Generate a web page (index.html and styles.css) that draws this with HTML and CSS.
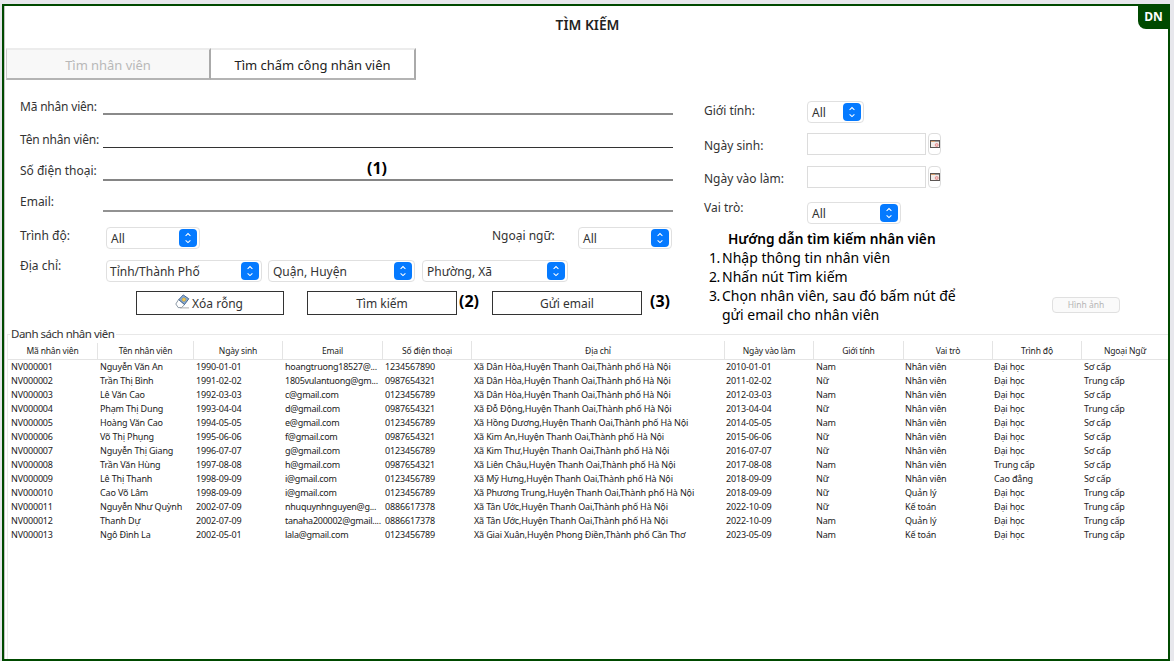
FILE: index.html
```html
<!DOCTYPE html>
<html lang="vi">
<head>
<meta charset="utf-8">
<title>Tìm kiếm nhân viên</title>
<link rel="stylesheet" href="styles.css">
</head>
<body>
<svg class="defs" aria-hidden="true">
  <symbol id="chev" viewBox="0 0 18 18"><path d="M6.6 6.8 9 4.6l2.4 2.2M6.6 11.4 9 13.6l2.4-2.2" fill="none" stroke="#fff" stroke-width="1.1"/></symbol>
  <symbol id="cal" viewBox="0 0 10 8"><rect x=".5" y=".5" width="9" height="7" fill="#f1ece9" stroke="#5b5553"/><path d="M1 1.5h4" stroke="#d8a070"/><path d="M5 1.5h4" stroke="#999"/><circle cx="6.7" cy="5" r="1.5" fill="#f6c4c4" stroke="#dd7777" stroke-width=".7"/></symbol>
</svg>
<main class="frame">
  <span class="badge">DN</span>
  <h1 class="title">TÌM KIẾM</h1>
  <nav class="tabs">
    <button class="tab off" disabled>Tìm nhân viên</button>
    <button class="tab">Tìm chấm công nhân viên</button>
  </nav>
  <section class="form">
    <div class="left">
      <div class="row"><label class="tight">Mã nhân viên:</label><span class="line l1"></span></div>
      <div class="row"><label class="tight">Tên nhân viên:</label><span class="line l2"></span></div>
      <div class="row phone"><label>Số điện thoại:</label><span class="line l3"></span><b class="step over">(1)</b></div>
      <div class="row"><label>Email:</label><span class="line l4"></span></div>
      <div class="row"><label class="wide">Trình độ:</label><span class="combo w94">All<svg><use href="#chev"/></svg></span><label class="lang">Ngoại ngữ:</label><span class="combo w94">All<svg><use href="#chev"/></svg></span></div>
      <div class="row"><label class="wide up">Địa chỉ:</label><span class="combo w156 place">Tỉnh/Thành Phố<svg><use href="#chev"/></svg></span><span class="combo w147 place">Quận, Huyện<svg><use href="#chev"/></svg></span><span class="combo w146 place">Phường, Xã<svg><use href="#chev"/></svg></span></div>
      <div class="row actions">
        <button class="btn clear"><svg class="eraser" viewBox="0 0 15 15"><path d="M.8 10 3.600 5.600l6 5L6.500 13.600H3.200z" fill="#fff" stroke="#6f7f8f" stroke-width=".8"/><path d="M3.800 5.600 8.200.9l5.600 3.900-4.300 5.700z" fill="#86abd8" stroke="#3f5f86" stroke-width=".9"/><circle cx="8.900" cy="5.600" r="1.900" fill="#f1c64f" stroke="#a08840" stroke-width=".4"/><path d="M5 13.900h9" stroke="#999" stroke-width=".8"/></svg>Xóa rỗng</button>
        <button class="btn find">Tìm kiếm</button><b class="step s2">(2)</b>
        <button class="btn mail">Gửi email</button><b class="step s3">(3)</b>
      </div>
    </div>
    <div class="right">
      <div class="row"><label>Giới tính:</label><span class="combo w56">All<svg><use href="#chev"/></svg></span></div>
      <div class="row"><label class="d2">Ngày sinh:</label><span class="date"></span><span class="pick"><svg><use href="#cal"/></svg></span></div>
      <div class="row"><label class="d2">Ngày vào làm:</label><span class="date"></span><span class="pick"><svg><use href="#cal"/></svg></span></div>
      <div class="row"><label class="d3">Vai trò:</label><span class="combo w94">All<svg><use href="#chev"/></svg></span></div>
      <div class="help">
        <div class="guide">
          <h2>Hướng dẫn tìm kiếm nhân viên</h2>
          <p><span>1.</span><span>Nhập thông tin nhân viên</span></p>
          <p><span>2.</span><span>Nhấn nút Tìm kiếm</span></p>
          <p><span>3.</span><span>Chọn nhân viên, sau đó bấm nút để<br>gửi email cho nhân viên</span></p>
        </div>
        <button class="photo" disabled>Hình ảnh</button>
      </div>
    </div>
  </section>
  <section class="list">
    <h3 class="legend">Danh sách nhân viên</h3>
    <table>
      <colgroup><col class="c1"><col class="c2"><col class="c3"><col class="c4"><col class="c5"><col class="c6"><col class="c7"><col class="c8"><col class="c9"><col class="c10"><col class="c11"></colgroup>
      <thead><tr><th>Mã nhân viên</th><th>Tên nhân viên</th><th>Ngày sinh</th><th>Email</th><th>Số điện thoại</th><th>Địa chỉ</th><th>Ngày vào làm</th><th>Giới tính</th><th>Vai trò</th><th>Trình độ</th><th>Ngoại Ngữ</th></tr></thead>
      <tbody>
      <tr><td>NV000001</td><td>Nguyễn Văn An</td><td>1990-01-01</td><td>hoangtruong18527@...</td><td>1234567890</td><td>Xã Dân Hòa,Huyện Thanh Oai,Thành phố Hà Nội</td><td>2010-01-01</td><td>Nam</td><td>Nhân viên</td><td>Đại học</td><td>Sơ cấp</td></tr>
      <tr><td>NV000002</td><td>Trần Thị Bình</td><td>1991-02-02</td><td>1805vulantuong@gm...</td><td>0987654321</td><td>Xã Dân Hòa,Huyện Thanh Oai,Thành phố Hà Nội</td><td>2011-02-02</td><td>Nữ</td><td>Nhân viên</td><td>Đại học</td><td>Trung cấp</td></tr>
      <tr><td>NV000003</td><td>Lê Văn Cao</td><td>1992-03-03</td><td>c@gmail.com</td><td>0123456789</td><td>Xã Dân Hòa,Huyện Thanh Oai,Thành phố Hà Nội</td><td>2012-03-03</td><td>Nam</td><td>Nhân viên</td><td>Đại học</td><td>Sơ cấp</td></tr>
      <tr><td>NV000004</td><td>Phạm Thị Dung</td><td>1993-04-04</td><td>d@gmail.com</td><td>0987654321</td><td>Xã Đỗ Động,Huyện Thanh Oai,Thành phố Hà Nội</td><td>2013-04-04</td><td>Nữ</td><td>Nhân viên</td><td>Đại học</td><td>Trung cấp</td></tr>
      <tr><td>NV000005</td><td>Hoàng Văn Cao</td><td>1994-05-05</td><td>e@gmail.com</td><td>0123456789</td><td>Xã Hồng Dương,Huyện Thanh Oai,Thành phố Hà Nội</td><td>2014-05-05</td><td>Nam</td><td>Nhân viên</td><td>Đại học</td><td>Sơ cấp</td></tr>
      <tr><td>NV000006</td><td>Võ Thị Phụng</td><td>1995-06-06</td><td>f@gmail.com</td><td>0987654321</td><td>Xã Kim An,Huyện Thanh Oai,Thành phố Hà Nội</td><td>2015-06-06</td><td>Nữ</td><td>Nhân viên</td><td>Đại học</td><td>Sơ cấp</td></tr>
      <tr><td>NV000007</td><td>Nguyễn Thị Giang</td><td>1996-07-07</td><td>g@gmail.com</td><td>0123456789</td><td>Xã Kim Thư,Huyện Thanh Oai,Thành phố Hà Nội</td><td>2016-07-07</td><td>Nữ</td><td>Nhân viên</td><td>Đại học</td><td>Sơ cấp</td></tr>
      <tr><td>NV000008</td><td>Trần Văn Hùng</td><td>1997-08-08</td><td>h@gmail.com</td><td>0987654321</td><td>Xã Liên Châu,Huyện Thanh Oai,Thành phố Hà Nội</td><td>2017-08-08</td><td>Nam</td><td>Nhân viên</td><td>Trung cấp</td><td>Sơ cấp</td></tr>
      <tr><td>NV000009</td><td>Lê Thị Thanh</td><td>1998-09-09</td><td>i@gmail.com</td><td>0123456789</td><td>Xã Mỹ Hưng,Huyện Thanh Oai,Thành phố Hà Nội</td><td>2018-09-09</td><td>Nữ</td><td>Nhân viên</td><td>Cao đẳng</td><td>Sơ cấp</td></tr>
      <tr><td>NV000010</td><td>Cao Võ Lâm</td><td>1998-09-09</td><td>i@gmail.com</td><td>0123456789</td><td>Xã Phương Trung,Huyện Thanh Oai,Thành phố Hà Nội</td><td>2018-09-09</td><td>Nữ</td><td>Quản lý</td><td>Đại học</td><td>Trung cấp</td></tr>
      <tr><td>NV000011</td><td>Nguyễn Như Quỳnh</td><td>2002-07-09</td><td>nhuquynhnguyen@g...</td><td>0886617378</td><td>Xã Tân Ước,Huyện Thanh Oai,Thành phố Hà Nội</td><td>2022-10-09</td><td>Nữ</td><td>Kế toán</td><td>Đại học</td><td>Trung cấp</td></tr>
      <tr><td>NV000012</td><td>Thanh Dự</td><td>2002-07-09</td><td>tanaha200002@gmail....</td><td>0886617378</td><td>Xã Tân Ước,Huyện Thanh Oai,Thành phố Hà Nội</td><td>2022-10-09</td><td>Nam</td><td>Quản lý</td><td>Đại học</td><td>Trung cấp</td></tr>
      <tr><td>NV000013</td><td>Ngô Đình La</td><td>2002-05-01</td><td>lala@gmail.com</td><td>0123456789</td><td>Xã Giai Xuân,Huyện Phong Điền,Thành phố Cần Thơ</td><td>2023-05-09</td><td>Nam</td><td>Kế toán</td><td>Đại học</td><td>Trung cấp</td></tr>
      </tbody>
    </table>
  </section>
</main>
</body>
</html>
```

FILE: styles.css
```css
* { box-sizing: border-box; }
body { margin: 0; height: 661px; padding: 4px 4px 0 2px; overflow: hidden; background: #e7e7ec; font-family: "Noto Sans", "Open Sans", sans-serif; font-size: 12px; color: #333; }
h1, h2, h3, p { margin: 0; }
button { font: inherit; color: inherit; padding: 0; margin: 0; }
.defs { position: absolute; width: 0; height: 0; }
.frame { position: relative; height: 657px; border: 2px solid #004a00; background: #fff; box-shadow: inset 1px 0 #c4c4c4; }
.badge { position: absolute; top: -2px; right: -2px; width: 32px; height: 25px; padding-right: 1px; border-bottom-left-radius: 8px; background: #004a00; color: #fff; font: bold 12px/26px "Open Sans", sans-serif; text-align: center; }
.title { height: 42px; padding-top: 9px; padding-left: 3px; line-height: 20px; font-size: 13.8px; font-weight: 600; color: #222; text-align: center; }
.tabs { display: flex; padding-left: 2px; height: 32px; }
.tab { width: 205px; height: 32px; border: 1px solid #aaa; border-top: 2px solid #ececec; border-right: 2px solid #aaa; border-bottom: 2px solid #b4b4b4; border-left: 0; background: #fff; font-size: 13px; letter-spacing: -.04px; padding-top: 1px; color: #222; }
.tab.off { background: #f8f8f8; border-left: 1px solid #ccc; color: #b8b8b8; }
.form { display: grid; grid-template-columns: 684px 1fr; height: 246px; padding: 18px 0 0 16px; }
.left { display: grid; grid-template-rows: 33px 31px 31px 34px 33px 31px; }
.row { display: flex; align-items: flex-start; }
label { flex: none; width: 83px; line-height: 18px; white-space: nowrap; }
.tight { letter-spacing: -.2px; }
.line { width: 570px; }
.l1 { height: 17px; border-bottom: 2px solid #8a8a8a; }
.l2 { height: 17px; border-bottom: 1px solid #333; }
.l3 { height: 19px; border-bottom: 2px solid #858585; }
.l4 { height: 19px; border-bottom: 2px solid #929292; }
.step { color: #000; font: 700 16px/20px "Open Sans", sans-serif; }
.phone { position: relative; }
.over { position: absolute; left: 347px; top: -4px; }
.wide { width: 86px; }
.up { margin-top: -3px; }
.lang { width: 86px; margin-left: 292px; }
.combo { display: flex; justify-content: space-between; align-items: center; height: 22px; border: 1px solid #e0e0e0; border-radius: 4px; padding: 0 2px 0 4px; background: #fff; white-space: nowrap; }
.combo svg { flex: none; width: 18px; height: 18px; background: #057aff; border-radius: 4px; }
.w94 { width: 94px; }
.w56 { width: 57px; }
.w156 { width: 156px; }
.w147 { width: 147px; margin-left: 6px; }
.w146 { width: 146px; margin-left: 7px; }
.place { padding-left: 4px; }
.w156.place { padding-left: 3px; }
.btn { display: flex; align-items: center; justify-content: center; height: 24px; border: 1px solid #333; background: #fff; }
.clear { width: 148px; margin-left: 116px; }
.eraser { width: 15px; height: 15px; margin: -3px 2px 0 -2px; }
.find { width: 150px; margin-left: 23px; }
.s2 { width: 35px; padding-left: 2px; }
.mail { width: 150px; }
.s3 { margin-left: 8px; }
.right { display: grid; grid-template-rows: 32px 33px 36px 27px 1fr; padding-top: 3px; }
.right label { width: 103px; padding-top: 1px; }
.right .d2 { padding-top: 4px; }
.right .d3 { margin-top: -4px; }
.date { width: 119px; height: 22px; border: 1px solid #dcdcdc; }
.pick { display: flex; align-items: center; justify-content: center; width: 13px; height: 22px; margin-left: 2px; border: 1px solid #ddd; border-radius: 4px; }
.pick svg { flex: none; width: 10px; height: 8px; }
.help { display: flex; }
.guide { width: 348px; padding: 0 0 0 5px; color: #000; font-size: 14px; line-height: 19px; white-space: nowrap; }
.guide h2 { padding-left: 19px; font-size: 13.7px; font-weight: 600; line-height: 19px; }
.guide p { display: flex; }
.guide p span:first-child { width: 13px; letter-spacing: -.4px; }
.photo { width: 68px; height: 16px; margin-top: 68px; border: 1px solid #e0e0e0; border-radius: 4px; background: #fafafa; color: #b5b5b5; font-size: 8.5px; line-height: 14px; }
.list { position: relative; height: 325px; margin: 8px 0 0 3px; border-top: 1px solid #e8e8e8; border-left: 1px solid #ededed; padding-top: 6px; }
.legend { position: absolute; top: -10px; left: 2px; padding: 0 2px 0 1px; background: #fff; font-size: 11.5px; letter-spacing: -.5px; font-weight: 400; line-height: 18px; }
table { width: 1160px; table-layout: fixed; border-collapse: separate; border-spacing: 0; font-size: 9px; letter-spacing: -.16px; }
.c1 { width: 90px; } .c2 { width: 96px; } .c3 { width: 89px; } .c4 { width: 100px; } .c5 { width: 89px; } .c6 { width: 253px; }
.c7 { width: 89px; } .c8 { width: 90px; } .c9 { width: 89px; } .c10 { width: 89px; }
th { height: 19px; padding: 1px 0 0; border-right: 1px solid #e4e4e4; border-bottom: 1px solid #e4e4e4; font-weight: 400; font-size: 8.5px; color: #222; }
th:last-child { border-right: 0; }
td { height: 14px; padding: 0 0 0 2px; line-height: 14px; white-space: nowrap; color: #222; }
td:first-child { padding-left: 3px; }
td:nth-child(4) { letter-spacing: -.27px; }
td:nth-child(7), td:nth-child(9), td:nth-child(10) { padding-left: 1px; }
```
